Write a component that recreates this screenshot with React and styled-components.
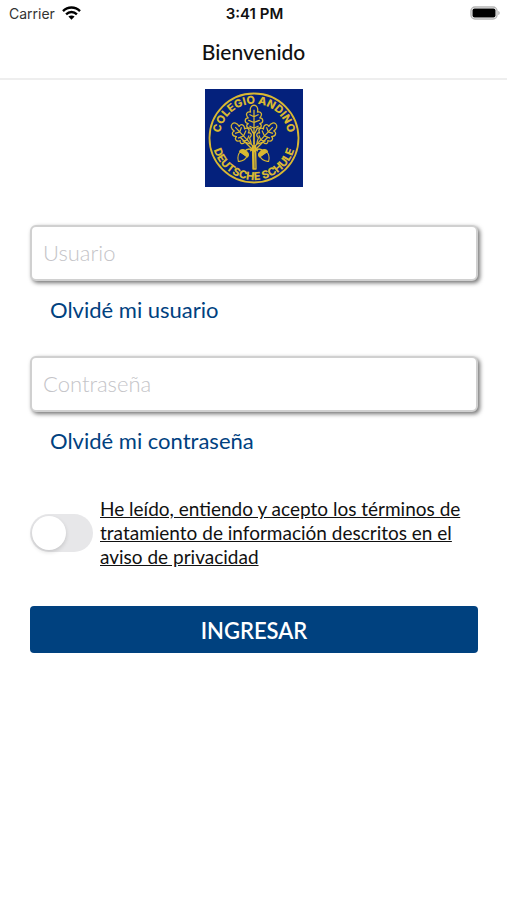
import React, { useState } from "react";
import styled, { createGlobalStyle, ThemeProvider } from "styled-components";

const theme = {
  blue: "#00417f",
  logoBlue: "#04217c",
  gold: "#d9b832",
  text: "Lato, 'Open Sans', sans-serif",
  system: "Inter, 'Liberation Sans', sans-serif",
};

const GlobalStyle = createGlobalStyle`
  *, *::before, *::after { box-sizing: border-box; }
  body { margin: 0; background: #fff; color: #111; }
`;

const Screen = styled.div`
  display: flex;
  flex-direction: column;
  min-height: 100vh;
  font-family: ${({ theme }) => theme.text};
`;

const StatusBar = styled.div`
  display: grid;
  grid-template-columns: 1fr auto 1fr;
  align-items: center;
  height: 26px;
  padding: 0 7px 0 9px;
  font-family: ${({ theme }) => theme.system};
  font-size: 14px;
`;

const Carrier = styled.div`
  display: flex;
  align-items: center;
  gap: 7px;
  color: #333;
`;

const Clock = styled.time`
  font-size: 15px;
  font-weight: 600;
`;

const Battery = styled.svg`
  justify-self: end;
`;

const Header = styled.header`
  display: flex;
  align-items: center;
  justify-content: center;
  height: 54px;
  border-bottom: 2px solid #eee;
`;

const Title = styled.h1`
  margin: 0;
  font-size: 21px;
  line-height: 28px;
  font-weight: 500;
`;

const Form = styled.form`
  display: flex;
  flex-direction: column;
  padding: 9px 29px 24px 30px;
`;

const Logo = styled.svg`
  align-self: center;
  margin-bottom: 38px;
  background: ${({ theme }) => theme.logoBlue};
`;

const Field = styled.div`
  display: flex;
  flex-direction: column;
  align-items: flex-start;
  gap: 15px;
  margin-bottom: 32px;
`;

const TextInput = styled.input`
  width: 100%;
  height: 56px;
  padding: 0 11px 2px;
  border: 2px solid #d0d0d0;
  border-radius: 6px;
  background: #fff;
  box-shadow: 2px 2px 4px rgba(0, 0, 0, 0.55);
  color: #222;
  font-family: inherit;
  font-size: 22px;
  font-weight: 300;
  &::placeholder { color: #c4c4c8; opacity: 1; }
`;

const HelpLink = styled.a`
  margin-left: 20px;
  color: ${({ theme }) => theme.blue};
  font-size: 22px;
  line-height: 28px;
  text-decoration: none;
`;

const Consent = styled.div`
  display: flex;
  align-items: center;
  gap: 7px;
  margin: 10px 0 37px;
`;

const Switch = styled.input`
  appearance: none;
  flex: none;
  width: 63px;
  height: 38px;
  margin: 0;
  padding: 2px;
  border-radius: 19px;
  background: ${({ checked, theme }) => (checked ? theme.blue : "#e7e7e9")};
  cursor: pointer;
  &::before {
    content: "";
    display: block;
    width: 34px;
    height: 34px;
    margin-left: ${({ checked }) => (checked ? "25px" : "0")};
    border-radius: 50%;
    background: #fff;
    box-shadow: 0 2px 4px rgba(0, 0, 0, 0.15);
  }
`;

const TermsLink = styled.a`
  flex: 1;
  color: #111;
  font-size: 19px;
  line-height: 24px;
  text-decoration: underline;
`;

const SubmitButton = styled.button`
  height: 47px;
  padding: 2px 0 0;
  border: 0;
  border-radius: 4px;
  background: ${({ theme }) => theme.blue};
  color: #fff;
  font-family: inherit;
  font-size: 22px;
  font-weight: 600;
  cursor: pointer;
`;

function WifiIcon() {
  return (
    <svg width="19" height="14" viewBox="0 0 19 14" aria-hidden="true">
      <g fill="none" stroke="#000" strokeWidth="2.4">
        <path d="M1 5.1C5.8.3 13.2.3 18 5.1" />
        <path d="M4.1 8.3c3.1-3 7.7-3 10.8 0" />
      </g>
      <path d="M6.4 10.6c1.8-1.6 4.4-1.6 6.2 0l-3.1 3.1z" />
    </svg>
  );
}

function BatteryIcon() {
  return (
    <Battery width="30" height="14" viewBox="0 0 30 14" role="img" aria-label="Batería">
      <rect x="1" y="1" width="26" height="12" rx="4" fill="#fff" stroke="#b5b5b5" strokeWidth="1.4" />
      <rect x="2.5" y="2.5" width="23" height="9" rx="2" />
      <path d="M28.3 5c1.8.6 1.8 3.4 0 4z" fill="#aaa" />
    </Battery>
  );
}

const leaf =
  "M0 0C-2-2-2-4-3-5C-7-5-7-8-5-9C-9-10-8-14-5-14C-8-17-6-20-3-19C-4-23-2-25 0-25C2-25 4-23 3-19C6-20 8-17 5-14C8-14 9-10 5-9C7-8 7-5 3-5C2-4 2-2 0 0Z";
const veins = "M0 9V-21M0-5l-4-2M0-5l4-2M0-10l-5-2M0-10l5-2M0-15l-4-2M0-15l4-2";

function Leaf({ transform }) {
  return (
    <g transform={transform}>
      <path d={leaf} />
      <path d={veins} />
    </g>
  );
}

function Acorn({ transform }) {
  return (
    <g transform={transform}>
      <path d="M-4-1C-5 4-2 6 0 8C2 6 5 4 4-1Z" />
      <path d="M-5-1Q-5-5 0-5Q5-5 5-1Z" fill={theme.gold} />
    </g>
  );
}

function SchoolLogo() {
  return (
    <Logo width="98" height="98" viewBox="0 0 98 98" role="img" aria-label="Colegio Andino Deutsche Schule">
      <defs>
        <path id="upper-arc" d="M16 57A34 34 0 1 1 82 57" />
        <path id="lower-arc" d="M7 49A42 42 0 0 0 91 49" />
      </defs>
      <circle cx="49" cy="49" r="44.5" fill="none" stroke={theme.gold} strokeWidth="1.8" />
      <g fill={theme.gold} fontFamily="Inter, sans-serif" fontSize="11" fontWeight="800" textAnchor="middle">
        <text>
          <textPath href="#upper-arc" startOffset="50%">COLEGIO ANDINO</textPath>
        </text>
        <text>
          <textPath href="#lower-arc" startOffset="50%">DEUTSCHE SCHULE</textPath>
        </text>
      </g>
      <g fill="none" stroke={theme.gold} strokeWidth="1.1" strokeLinejoin="round">
        <Leaf transform="translate(49 45) scale(1.15)" />
        <Leaf transform="translate(46 55) rotate(-43) scale(1.1)" />
        <Leaf transform="translate(52 55) rotate(43) scale(1.1)" />
        <path d="M49 43V80M47.5 56L48 80H51L50.5 56M35 48L48 61M63 48L50 61M49 63Q44 57 39 63M49 63Q54 57 59 63" strokeWidth="1.4" />
        <Acorn transform="translate(38 66) rotate(35)" />
        <Acorn transform="translate(59 66) rotate(-35)" />
      </g>
    </Logo>
  );
}

export default function App() {
  const [accepted, setAccepted] = useState(false);

  return (
    <ThemeProvider theme={theme}>
      <GlobalStyle />
      <Screen>
        <StatusBar>
          <Carrier>
            Carrier
            <WifiIcon />
          </Carrier>
          <Clock>3:41 PM</Clock>
          <BatteryIcon />
        </StatusBar>
        <Header>
          <Title>Bienvenido</Title>
        </Header>
        <Form onSubmit={(event) => event.preventDefault()}>
          <SchoolLogo />
          <Field>
            <TextInput type="text" name="username" placeholder="Usuario" aria-label="Usuario" autoComplete="username" />
            <HelpLink href="#usuario">Olvidé mi usuario</HelpLink>
          </Field>
          <Field>
            <TextInput type="password" name="password" placeholder="Contraseña" aria-label="Contraseña" autoComplete="current-password" />
            <HelpLink href="#contrasena">Olvidé mi contraseña</HelpLink>
          </Field>
          <Consent>
            <Switch
              type="checkbox"
              role="switch"
              checked={accepted}
              onChange={(event) => setAccepted(event.target.checked)}
              aria-labelledby="terms"
            />
            <TermsLink id="terms" href="#privacidad">
              He leído, entiendo y acepto los términos de tratamiento de información descritos en el aviso de privacidad
            </TermsLink>
          </Consent>
          <SubmitButton type="submit">INGRESAR</SubmitButton>
        </Form>
      </Screen>
    </ThemeProvider>
  );
}
